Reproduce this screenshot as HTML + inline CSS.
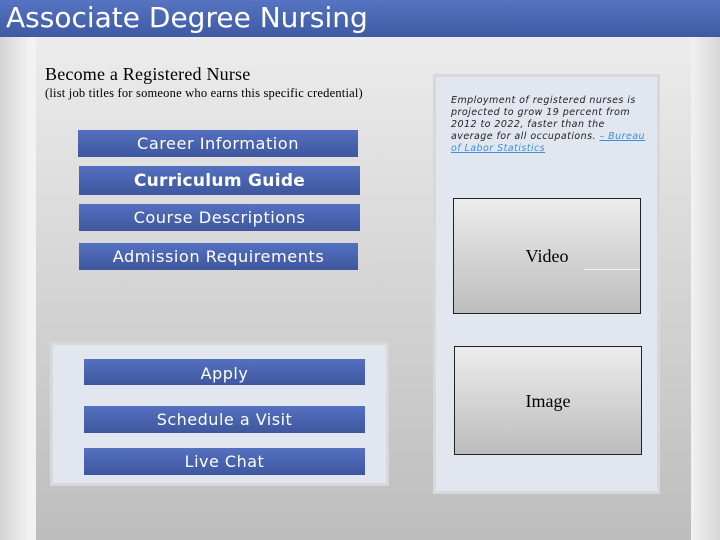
<!DOCTYPE html>
<html><head><style>
*{margin:0;padding:0;box-sizing:border-box}
body{width:720px;height:540px;position:relative;overflow:hidden;font-family:"DejaVu Sans","Liberation Sans",sans-serif;background:linear-gradient(90deg,#d4d4d4 0,#f2f2f2 30px,#e8e8e8 50%,#f2f2f2 690px,#d8d8d8 720px)}
.hdr{position:absolute;left:0;top:0;width:720px;height:37px;background:linear-gradient(#5674c2,#3f5aa3);color:#fff;font-size:28px;padding-left:6px;line-height:36px;font-family:"DejaVu Sans",sans-serif}
.main{position:absolute;left:36px;top:37px;width:655px;height:503px;background:linear-gradient(#ececec,#bdbdbd)}
.b{position:absolute;background:linear-gradient(#5470c0,#3e579e);color:#fff;font-size:16.2px;text-align:center;letter-spacing:.5px}
.serif{font-family:"Liberation Serif",serif;position:absolute}
.panel{position:absolute;background:#e2e7ef;border:3px solid #d6d8db}
.box{position:absolute;border:1px solid #222;background:linear-gradient(#ececec,#bdbdbd);font-family:"Liberation Serif",serif;font-size:18px;text-align:center}
</style></head><body>
<div class="hdr">Associate Degree Nursing</div>
<div class="main"></div>
<div class="serif" style="left:45px;top:64px;font-size:18px;letter-spacing:.2px">Become a Registered Nurse</div>
<div class="serif" style="left:45px;top:86px;font-size:12.5px;letter-spacing:.2px">(list job titles for someone who earns this specific credential)</div>
<div class="b" style="left:78px;top:130px;width:280px;height:27px;line-height:28px">Career Information</div>
<div class="b" style="left:79px;top:166px;width:281px;height:29px;line-height:30px;font-weight:bold;font-size:17px;letter-spacing:.3px">Curriculum Guide</div>
<div class="b" style="left:79px;top:204px;width:281px;height:27px;line-height:28px">Course Descriptions</div>
<div class="b" style="left:79px;top:243px;width:279px;height:27px;line-height:28px">Admission Requirements</div>
<div class="panel" style="left:50px;top:342px;width:339px;height:144px"></div>
<div class="b" style="left:84px;top:359px;width:281px;height:26px;line-height:29px;font-size:16px">Apply</div>
<div class="b" style="left:84px;top:406px;width:281px;height:27px;line-height:28px;font-size:16px">Schedule a Visit</div>
<div class="b" style="left:84px;top:448px;width:281px;height:27px;line-height:28px;font-size:16px">Live Chat</div>
<div class="panel" style="left:433px;top:74px;width:227px;height:420px"></div>
<div style="position:absolute;left:451px;top:95px;white-space:nowrap;font-size:9.5px;line-height:12px;font-style:italic;color:#222;letter-spacing:.45px">Employment of registered nurses is<br>projected to grow 19 percent from<br>2012 to 2022, faster than the<br>average for all occupations. <span style="color:#3b8fd8;text-decoration:underline">– Bureau</span><br><span style="color:#3b8fd8;text-decoration:underline">of Labor Statistics </span></div>
<div class="box" style="left:453px;top:198px;width:188px;height:116px;line-height:114px">Video<div style="position:absolute;left:130px;top:70px;width:56px;height:1px;background:#f4f4f4"></div></div>
<div class="box" style="left:454px;top:346px;width:188px;height:109px;line-height:108px">Image</div>
</body></html>
